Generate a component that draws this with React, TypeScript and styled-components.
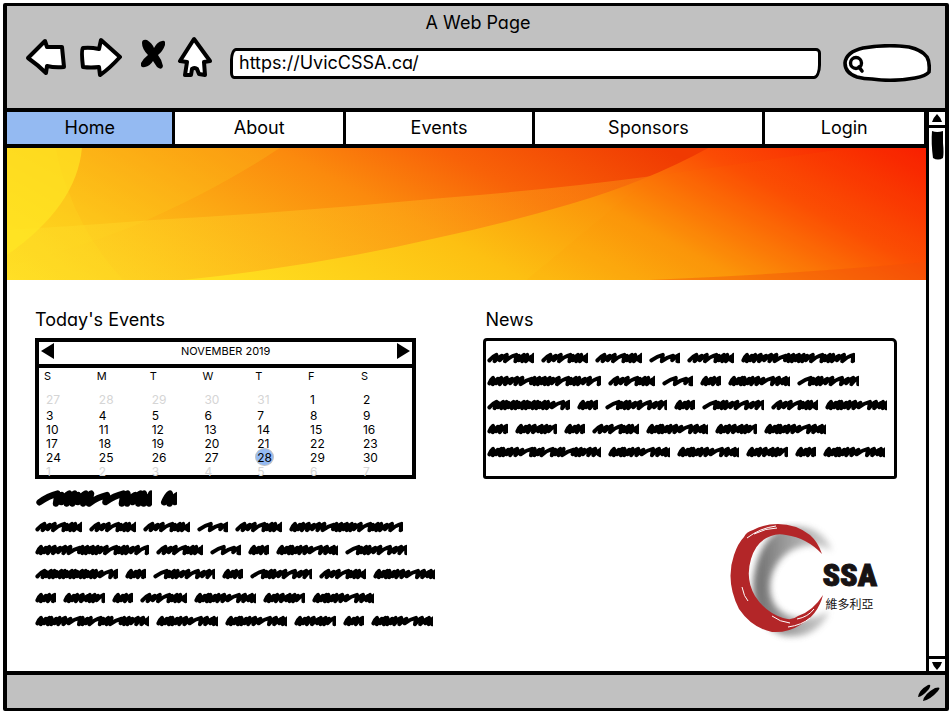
import React from "react";
import styled, { createGlobalStyle } from "styled-components";

const INK = "#000";
const CHROME = "#c1c1c1";
const BLUE = "#94baf2";

const GlobalStyle = createGlobalStyle`
  *, *::before, *::after { box-sizing: border-box; }
  html, body { margin: 0; background: #fff; }
  body, button, input {
    font-family: Inter, "Liberation Sans", sans-serif;
    font-feature-settings: "cv11";
    font-size: 18px;
    color: ${INK};
  }
  button { padding: 0; border: 0; background: none; cursor: pointer; }
`;

const Frame = styled.div`
  min-height: calc(100vh - 7px);
  margin: 3px 3px 4px;
  border: 4px solid ${INK};
  border-top-width: 3px;
  border-bottom-width: 3px;
  border-radius: 2px;
  display: flex;
  flex-direction: column;
  overflow: hidden;
`;

const Toolbar = styled.header`
  background: ${CHROME};
  border-bottom: 4px solid ${INK};
  padding: 4px 14px 26px 18px;
`;

const PageTitle = styled.div`
  text-align: center;
  line-height: 26px;
`;

const Controls = styled.div`
  display: flex;
  align-items: center;
  height: 46px;
`;

const IconButton = styled.button<{ $gap: number }>`
  display: flex;
  flex: none;
  margin-right: ${(p) => p.$gap}px;
  padding-bottom: 4px;
`;

const AddressBar = styled.input`
  flex: 1;
  min-width: 0;
  height: 31px;
  margin: 8px 22px 0 0;
  padding: 0 6px 2px;
  border: 3px solid ${INK};
  border-radius: 6px 5px 7px 4px / 12px 5px 14px 6px;
  background: #fff;
  outline: none;
`;

const SearchBox = styled.label`
  position: relative;
  flex: none;
  width: 88px;
  height: 38px;
  margin-top: 8px;
  svg { position: absolute; inset: 0; }
`;

const SearchInput = styled.input`
  position: relative;
  width: 100%;
  height: 100%;
  padding: 0 12px 0 24px;
  border: 0;
  background: transparent;
  outline: none;
  font-size: 14px;
`;

const Viewport = styled.div`
  flex: 1;
  display: grid;
  grid-template-columns: minmax(0, 1fr) 16px;
`;

const Page = styled.main`
  border-right: 3px solid ${INK};
`;

const Nav = styled.nav`
  display: grid;
  grid-template-columns: 166fr 168fr 187fr 227fr 160fr;
  gap: 3px;
  padding-right: 2px;
  background: ${INK};
  border-bottom: 4px solid ${INK};
`;

const NavLink = styled.a<{ $active?: boolean }>`
  height: 32px;
  line-height: 32px;
  text-align: center;
  text-decoration: none;
  color: ${INK};
  background: ${(p) => (p.$active ? BLUE : "#fff")};
`;

const BannerArt = styled.svg`
  display: block;
  width: 100%;
  height: 132px;
`;

const Columns = styled.div`
  display: grid;
  grid-template-columns: 402fr 415fr;
  column-gap: 46px;
  padding: 27px 29px 20px 28px;
`;

const Column = styled.section`
  display: flex;
  flex-direction: column;
  min-width: 0;
`;

const Heading = styled.h2<{ $inset?: boolean }>`
  margin: 0 0 5px;
  padding-left: ${(p) => (p.$inset ? 3 : 0)}px;
  font-size: 18px;
  font-weight: 400;
  line-height: 26px;
`;

const Calendar = styled.div`
  width: 95%;
  border: 4px solid ${INK};
`;

const MonthBar = styled.div`
  display: flex;
  align-items: center;
  justify-content: space-between;
  height: 26px;
  padding: 0 2px 5px;
  border-bottom: 4px solid ${INK};
  font-size: 11px;
  button { display: flex; }
`;

const Days = styled.table`
  width: 99%;
  margin-bottom: -4px;
  border-collapse: collapse;
  table-layout: fixed;
  font-size: 12px;
  th, td { padding: 0 0 0 7px; text-align: left; font-weight: 400; line-height: 14px; }
  th { height: 24px; padding-left: 5px; padding-top: 1px; vertical-align: top; font-size: 11px; }
  tr:first-child td { height: 17px; padding-bottom: 2px; }
`;

const DayCell = styled.td<{ $muted?: boolean }>`
  height: 14px;
  color: ${(p) => (p.$muted ? "#d5d5d5" : INK)};
`;

const Today = styled.span`
  position: relative;
  z-index: 0;
  &::before {
    content: "";
    position: absolute;
    z-index: -1;
    inset: -2px -2px;
    height: 18px;
    border: 1px solid #c3c3c3;
    border-radius: 50%;
    background: ${BLUE};
  }
`;

const NewsBox = styled.div`
  min-height: 141px;
  padding: 5px 0 0 1px;
  border: 3px solid ${INK};
  border-radius: 4px 5px 3px 3px;
`;

const TitleScribble = styled.div`
  display: flex;
  gap: 8px;
  width: 142px;
  margin: 10px 0 7px;
  overflow: hidden;
`;

const Copy = styled.div`
  display: grid;
  grid-auto-rows: 1fr;
  height: 118px;
`;

const CopyLine = styled.div`
  display: flex;
  align-items: center;
  gap: 7px;
`;

const WordArt = styled.svg`
  display: block;
  flex: none;
`;

const Brand = styled.div`
  display: flex;
  align-self: flex-end;
  margin: 42px 20px 0 0;
`;

const LogoRing = styled.svg`
  display: block;
  flex: none;
  margin-right: -16px;
`;

const BrandText = styled.div`
  padding-top: 34px;
  color: #171314;
`;

const BrandName = styled.div`
  font-family: "Roboto Condensed", "Liberation Sans Narrow", "Liberation Sans", sans-serif;
  font-size: 32px;
  font-weight: 900;
  line-height: 40px;
  -webkit-text-stroke: 1px #171314;
`;

const BrandPlace = styled.div`
  padding-left: 3px;
  font-family: "Noto Sans CJK TC", sans-serif;
  font-size: 12px;
  line-height: 18px;
`;

const ScrollTrack = styled.div`
  display: flex;
  flex-direction: column;
`;

const ScrollButton = styled.button<{ $end?: boolean }>`
  display: flex;
  align-items: center;
  justify-content: center;
  height: ${(p) => (p.$end ? 15 : 16)}px;
  margin-top: ${(p) => (p.$end ? "auto" : 0)};
  border-top: ${(p) => (p.$end ? 3 : 0)}px solid ${INK};
  border-bottom: ${(p) => (p.$end ? 0 : 3)}px solid ${INK};
`;

const Footer = styled.footer`
  display: flex;
  align-items: center;
  justify-content: flex-end;
  height: 37px;
  padding-right: 4px;
  border-top: 4px solid ${INK};
  background: ${CHROME};
`;

/* Pen strokes: i = one short stroke, r = one long sweep, m = a dense knot. */
const UNIT = 5.2;

function scribblePath(word: string) {
  let x = 2.4;
  let d = "M2.4 8.4";
  let n = 0;
  const stroke = (step: number, reach: number) => {
    const lift = n % 3 === 1 ? 0.9 : 0;
    const px = x + reach;
    const py = 2.9 + lift;
    const startX = x;
    x += step;
    d += ` Q${(startX + reach * 0.5).toFixed(1)} ${(4.2 + lift).toFixed(1)} ${px.toFixed(1)} ${py.toFixed(1)}`;
    d += ` L${x.toFixed(1)} ${(9.2 - lift).toFixed(1)}`;
    n += 1;
  };
  const last = word.length - 1;
  [...word].forEach((c, i) => {
    const trim = i === last ? 3.6 : 0;
    if (c === "i") stroke(UNIT - trim, trim ? 2.6 : 7);
    if (c === "r") stroke(2 * UNIT - trim, trim ? 7 : 11.4);
    if (c === "m") {
      stroke(3.4, 3.6);
      stroke(3.4, 5);
      stroke(3.6 - trim, trim ? 1.4 : 5);
    }
  });
  return d;
}

function Word({ word, scale = 1 }: { word: string; scale?: number }) {
  const units = [...word].reduce((n, c) => n + (c === "i" ? 1 : 2), 0);
  const width = Math.round(units * UNIT);
  return (
    <WordArt
      width={Math.round(width * scale)}
      height={Math.round(12 * scale)}
      viewBox={`0 0 ${width} 12`}
      aria-hidden="true"
    >
      <path
        d={scribblePath(word)}
        fill="none"
        stroke={INK}
        strokeWidth="4"
        strokeLinecap="round"
        strokeLinejoin="round"
      />
    </WordArt>
  );
}

const A = "iiirmii";
const B = "rrii";
const C = "mii";
const D = "miimr";
const E = "mmiiriim";
const F = "miiiirmmirmiiri";
const G = "rmiiriir";
const H = "immmmmirii";
const I = "mmiirmrmrmiiii";

const LINES = [
  [A, A, A, B, A, F],
  [F, A, B, C, E, G],
  [H, C, G, C, G, A, E],
  [C, D, C, A, E, D, E],
  [I, E, E, D, C, E],
];

function Paragraph() {
  return (
    <Copy>
      {LINES.map((line, i) => (
        <CopyLine key={i}>
          {line.map((w, j) => (
            <Word key={j} word={w} />
          ))}
        </CopyLine>
      ))}
    </Copy>
  );
}

function Banner() {
  return (
    <BannerArt viewBox="0 0 920 132" preserveAspectRatio="none" aria-hidden="true">
      <defs>
        <linearGradient id="upper" gradientUnits="userSpaceOnUse" x1="0" y1="132" x2="201" y2="-244">
          <stop offset="0" stopColor="#ffe024" />
          <stop offset="0.23" stopColor="#fdbe18" />
          <stop offset="0.57" stopColor="#fb8a0d" />
          <stop offset="0.75" stopColor="#f86208" />
          <stop offset="1" stopColor="#f03a02" />
        </linearGradient>
        <linearGradient id="lower" gradientUnits="userSpaceOnUse" x1="0" y1="18" x2="212" y2="-378">
          <stop offset="0" stopColor="#ffdf20" />
          <stop offset="0.32" stopColor="#fdc012" />
          <stop offset="0.55" stopColor="#fb960a" />
          <stop offset="0.76" stopColor="#fb4c04" />
          <stop offset="1" stopColor="#f81900" />
        </linearGradient>
        <linearGradient id="sheen" x1="0" y1="0" x2="1" y2="0">
          <stop offset="0" stopColor="#ffe02a" stopOpacity="0.45" />
          <stop offset="1" stopColor="#ffa010" stopOpacity="0.25" />
        </linearGradient>
      </defs>
      <rect width="920" height="132" fill="url(#upper)" />
      <path d="M273 0C232 28 180 55 127 78Q60 104 0 118V0Z" fill="#ffd61f" opacity="0.2" />
      <path d="M0 82Q70 78 146 72Q290 64 436 50Q550 41 646 28Q760 12 843 0H920V132H0Z" fill="url(#sheen)" />
      <path d="M49 0Q52 20 61 42Q78 90 116 132H0V0Z" fill="#ffe321" opacity="0.2" />
      <path d="M75 0Q70 58 0 107V0Z" fill="#ffe824" opacity="0.65" />
      <path d="M702 0Q640 34 564 56Q500 75 430 90Q310 118 176 132H920V0Z" fill="url(#lower)" />
      <path d="M646 28Q760 12 843 0H920V132H520Z" fill="#ff9000" opacity="0.06" />
      <path d="M643 132Q790 126 920 114V132Z" fill="#f2500a" opacity="0.4" />
    </BannerArt>
  );
}

const WEEKDAYS = ["S", "M", "T", "W", "T", "F", "S"];
const DATES = [
  [27, 28, 29, 30, 31, 1, 2],
  [3, 4, 5, 6, 7, 8, 9],
  [10, 11, 12, 13, 14, 15, 16],
  [17, 18, 19, 20, 21, 22, 23],
  [24, 25, 26, 27, 28, 29, 30],
  [1, 2, 3, 4, 5, 6, 7],
];

function EventCalendar() {
  return (
    <Calendar>
      <MonthBar>
        <button type="button" aria-label="Previous month">
          <svg width="14" height="18"><path d="M0 9L13 1V17Z" /></svg>
        </button>
        <span>NOVEMBER 2019</span>
        <button type="button" aria-label="Next month">
          <svg width="14" height="18"><path d="M14 9L1 1V17Z" /></svg>
        </button>
      </MonthBar>
      <Days>
        <thead>
          <tr>{WEEKDAYS.map((d, i) => <th key={i} scope="col">{d}</th>)}</tr>
        </thead>
        <tbody>
          {DATES.map((week, w) => (
            <tr key={w}>
              {week.map((d, i) => (
                <DayCell key={i} $muted={w === 5 || (w === 0 && d > 7)}>
                  {w === 4 && d === 28 ? <Today>{d}</Today> : d}
                </DayCell>
              ))}
            </tr>
          ))}
        </tbody>
      </Days>
    </Calendar>
  );
}

function CssaLogo() {
  return (
    <Brand>
      <LogoRing width="108" height="124" viewBox="0 0 108 124" role="img" aria-label="C">
        <defs>
          <filter id="soft" x="-20%" y="-20%" width="140%" height="140%">
            <feGaussianBlur stdDeviation="3" />
          </filter>
          <linearGradient id="shade" x1="0.1" y1="0.5" x2="1" y2="0.5">
            <stop offset="0" stopColor="#555" />
            <stop offset="1" stopColor="#aaa" stopOpacity="0.7" />
          </linearGradient>
        </defs>
        <path
          d="M56 6C82 3 97 14 102 30C90 22 74 23 62 29C42 40 34 66 45 84C58 102 84 99 99 90C93 108 74 119 52 114C28 104 20 78 24 54C28 30 38 12 56 6Z"
          fill="url(#shade)"
          opacity="0.8"
          filter="url(#soft)"
        />
        <path
          d="M14 16Q16 11 23 9Q34 3 48 3Q66 3 80 14Q88 21 92 33Q77 17 56 14Q48 12 41 15Q26 20 21 38Q15 58 25 75Q35 91 53 97Q62 100 68 95Q83 90 93 74Q88 94 70 104Q58 112 42 111Q22 107 9 88Q-5 60 4 34Q8 22 14 16Z"
          fill="#b32628"
        />
        <path
          d="M17 17Q30 7 46 5M24 13Q36 7 47 7M12 66Q14 76 18 80M42 95Q50 101 60 102M67 98Q78 96 84 88M58 106Q72 104 80 97"
          fill="none"
          stroke="#fff"
          strokeWidth="1"
        />
      </LogoRing>
      <BrandText>
        <BrandName>SSA</BrandName>
        <BrandPlace lang="zh-Hant">維多利亞</BrandPlace>
      </BrandText>
    </Brand>
  );
}

const line = { fill: "#fff", stroke: INK, strokeWidth: 4, strokeLinejoin: "round" as const };

export default function App() {
  return (
    <>
      <GlobalStyle />
      <Frame>
        <Toolbar>
          <PageTitle>A Web Page</PageTitle>
          <Controls>
            <IconButton type="button" aria-label="Back" $gap={12}>
              <svg width="42" height="42"><path {...line} d="M3 22L20 5L22 11L37 11L39 31Q30 32 22 30L21 37Q13 29 3 22Z" /></svg>
            </IconButton>
            <IconButton type="button" aria-label="Forward" $gap={18}>
              <svg width="44" height="42"><path {...line} d="M41 21L22 4L20 13Q11 11 4 12Q2 14 4 31Q12 32 20 31L21 39Q30 33 41 21Z" /></svg>
            </IconButton>
            <IconButton type="button" aria-label="Stop" $gap={12}>
              <svg width="24" height="36">
                <path d="M1 4Q1 0 6 1Q11 4 13 9Q16 3 21 2Q25 1 24 6Q22 12 17 16Q21 21 22 27Q21 32 16 28L12 22Q9 27 4 28Q-1 29 0 24Q3 19 7 16Q1 10 1 4Z" />
              </svg>
            </IconButton>
            <IconButton type="button" aria-label="Home" $gap={18}>
              <svg width="35" height="42"><path {...line} d="M17 3L3 25L10 26L8 39H14L15 33Q18 31 20 33L22 38L28 39L27 26L33 25Z" /></svg>
            </IconButton>
            <AddressBar aria-label="Address" defaultValue="https://UvicCSSA.ca/" />
            <SearchBox>
              <svg width="88" height="38">
                <path {...line} strokeWidth="3.6" d="M14 33Q2 29 2 19Q3 8 20 4Q44 0 66 3Q79 6 84 13Q87 18 86 28Q83 32 72 34Q50 38 29 35Q21 35 14 33Z" />
                <circle cx="13" cy="19" r="5.5" fill="#fff" stroke={INK} strokeWidth="3.4" />
                <path d="M16 23L19 27" stroke={INK} strokeWidth="3.6" strokeLinecap="round" />
              </svg>
              <SearchInput type="search" aria-label="Search" />
            </SearchBox>
          </Controls>
        </Toolbar>
        <Viewport>
          <Page>
            <Nav>
              <NavLink href="#home" $active>Home</NavLink>
              <NavLink href="#about">About</NavLink>
              <NavLink href="#events">Events</NavLink>
              <NavLink href="#sponsors">Sponsors</NavLink>
              <NavLink href="#login">Login</NavLink>
            </Nav>
            <Banner />
            <Columns>
              <Column>
                <Heading>Today's Events</Heading>
                <EventCalendar />
                <TitleScribble>
                  <Word word="rmmrrmm" scale={1.6} />
                  <Word word="mm" scale={1.6} />
                </TitleScribble>
                <Paragraph />
              </Column>
              <Column>
                <Heading $inset>News</Heading>
                <NewsBox><Paragraph /></NewsBox>
                <CssaLogo />
              </Column>
            </Columns>
          </Page>
          <ScrollTrack>
            <ScrollButton type="button" aria-label="Scroll up">
              <svg width="12" height="9"><path d="M6 0Q10 4 11 8H1Q2 4 6 0Z" /></svg>
            </ScrollButton>
            <svg width="16" height="36" aria-hidden="true">
              <path d="M3 3Q8 5 14 3V15Q15 25 14 30Q9 33 4 30Q2 15 3 3Z" />
            </svg>
            <ScrollButton type="button" aria-label="Scroll down" $end>
              <svg width="12" height="9"><path d="M6 9Q10 5 11 1H1Q2 5 6 9Z" /></svg>
            </ScrollButton>
          </ScrollTrack>
        </Viewport>
        <Footer>
          <svg width="24" height="24" aria-hidden="true">
            <path d="M1 17Q2 10 11 5Q15 4 12 9Q5 17 1 17ZM6 21Q7 14 18 8Q25 6 21 11Q13 20 6 21Z" />
          </svg>
        </Footer>
      </Frame>
    </>
  );
}
